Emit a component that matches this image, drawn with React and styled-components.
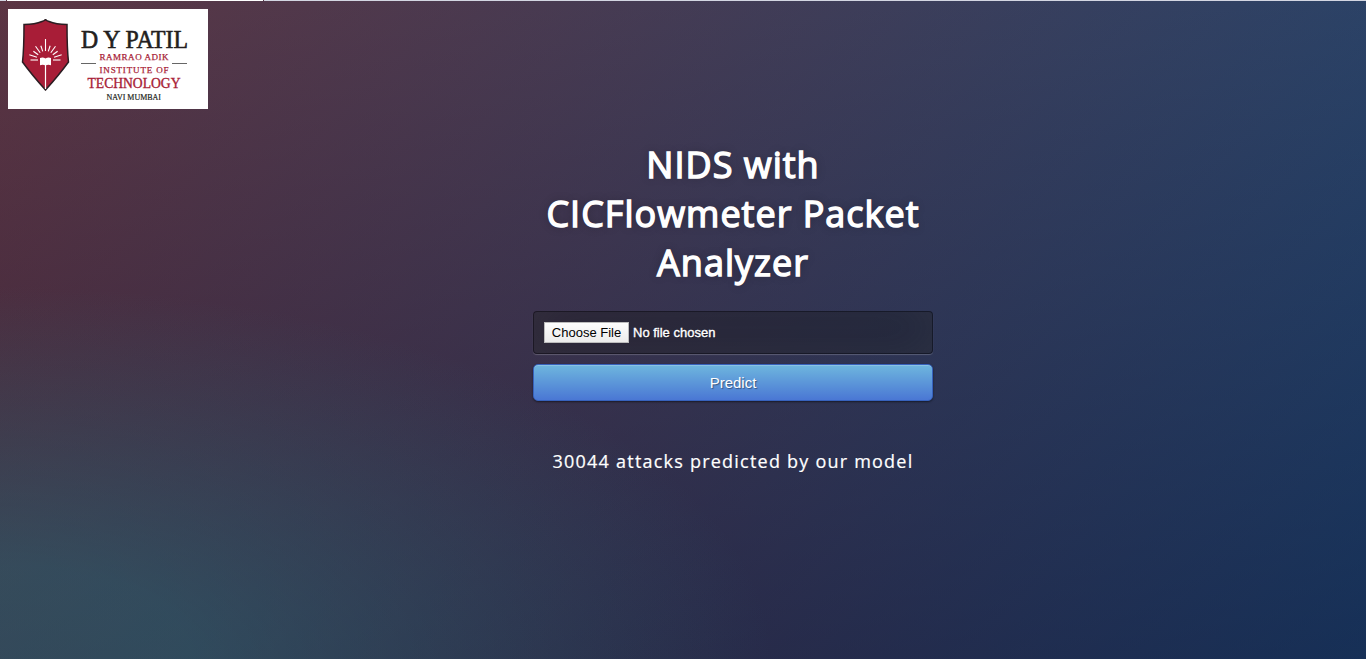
import React from "react";
import styled, { createGlobalStyle } from "styled-components";

const GlobalStyle = createGlobalStyle`
  *, *::before, *::after { box-sizing: border-box; }
  html, body { margin: 0; height: 100%; overflow: hidden; }
`;

const Page = styled.div`
  height: 100vh;
  display: flex;
  flex-direction: column;
  font-family: "Open Sans", sans-serif;
  color: #fff;
  background:
    radial-gradient(farthest-corner ellipse at 0% 100%, rgba(38, 128, 138, 0.4) 10%, rgba(38, 114, 120, 0) 40%),
    linear-gradient(to bottom, rgba(57, 173, 219, 0.25) 0%, rgba(42, 60, 87, 0.4) 100%),
    linear-gradient(135deg, #670d10 0%, #092756 100%);
`;

const TopEdge = styled.div`
  flex: none;
  display: flex;
  gap: 1px;
  height: 1px;
`;

const EdgeSegment = styled.div`
  flex: ${(p) => (p.$width ? `none` : 1)};
  width: ${(p) => p.$width || "auto"};
  background: ${(p) => p.$color};
`;

const Header = styled.header`
  flex: none;
  padding: 8px 8px 0;
`;

const Logo = styled.svg`
  display: block;
  width: 200px;
  height: 100px;
  background: #fff;
  font-family: "Liberation Serif", serif;
`;

const Main = styled.main`
  width: 400px;
  margin: 31px 0 0 533px;
  display: flex;
  flex-direction: column;
`;

const Title = styled.h1`
  margin: 0 0 24px;
  font-size: 36px;
  line-height: 49px;
  font-weight: 400;
  -webkit-text-stroke: 1.4px #fff;
  letter-spacing: 1px;
  text-align: center;
  text-shadow: 0 0 10px rgba(0, 0, 0, 0.3);
`;

const Form = styled.form`
  display: flex;
  flex-direction: column;
  gap: 10px;
  font-family: "Liberation Sans", Arial, sans-serif;
`;

const FileField = styled.div`
  display: flex;
  align-items: center;
  gap: 4px;
  height: 43px;
  padding: 0 10px;
  font-size: 13px;
  text-shadow: 1px 1px 1px rgba(0, 0, 0, 0.3);
  background: rgba(0, 0, 0, 0.3);
  border: 1px solid rgba(0, 0, 0, 0.3);
  border-radius: 4px;
  box-shadow: inset 0 -5px 45px rgba(100, 100, 100, 0.2), 0 1px 1px rgba(255, 255, 255, 0.2);
`;

const FileButton = styled.button`
  width: 85px;
  height: 21px;
  padding: 0;
  font: inherit;
  line-height: 15px;
  color: #000;
  background: linear-gradient(#fdfdfd, #ececec);
  border: 1px solid #bcbcbc;
  border-radius: 0;
  white-space: nowrap;
`;

const FileName = styled.span`
  line-height: 15px;
  -webkit-text-stroke: 0.35px #fff;
`;

const SubmitButton = styled.button`
  height: 37px;
  padding: 0 14px;
  font-family: inherit;
  font-size: 15px;
  color: #fff;
  text-shadow: 1px 1px 1px rgba(0, 0, 0, 0.4);
  background: linear-gradient(to bottom, #6eb6de, #4a77d4);
  border: 1px solid #3762bc;
  border-radius: 5px;
  box-shadow: inset 0 1px 0 rgba(255, 255, 255, 0.2), 0 1px 2px rgba(0, 0, 0, 0.5);
`;

const Result = styled.p`
  margin: 48px 0 0;
  font-size: 18px;
  line-height: 25px;
  letter-spacing: 1.22px;
  -webkit-text-stroke: 0.2px #fff;
  text-align: center;
  white-space: nowrap;
`;

const rays = [-90, -72, -54, -36, -18, 0, 18, 36, 54, 72, 90];

function InstituteLogo() {
  return (
    <Logo viewBox="0 0 200 100" role="img" aria-label="D Y Patil Ramrao Adik Institute of Technology">
      <path
        d="M16 15.5 Q27 15.5 34 12.5 Q37.5 11.5 37.5 10 Q37.5 11.5 41 12.5 Q48 15.5 59 15.5 Q59 40 60.5 53 Q51 66 37.5 81 Q24 66 14.5 53 Q16 40 16 15.5 Z"
        fill="#a81d37"
        stroke="#2b1d22"
        strokeWidth="1.5"
      />
      {rays.map((a) => (
        <line
          key={a}
          x1="37.5"
          y1={Math.abs(a) === 90 ? 43.5 : 42}
          x2="37.5"
          y2={a === 0 ? 30 : a % 36 === 0 ? 34 : 36}
          transform={`rotate(${a} 37.5 51)`}
          stroke="#fff"
          strokeWidth="1.1"
        />
      ))}
      <path d="M32 49 Q35 48 37.5 49.5 Q40 48 43 49 V56.2 Q40 55 37.5 56.5 Q35 55 32 56.2 Z" fill="#fff" />
      <line x1="37.5" y1="55" x2="37.5" y2="80" stroke="#fff" strokeWidth="1.2" />
      <text x="73" y="39.3" fontSize="25" textLength="107" lengthAdjust="spacingAndGlyphs" fill="#231f20" stroke="#231f20" strokeWidth=".6">D Y PATIL</text>
      <text x="91.5" y="51.4" fontSize="9" textLength="69" lengthAdjust="spacing" fill="#a81d37" stroke="#a81d37" strokeWidth=".25">RAMRAO ADIK</text>
      <text x="91.5" y="63.6" fontSize="9" textLength="69" lengthAdjust="spacing" fill="#a81d37" stroke="#a81d37" strokeWidth=".25">INSTITUTE OF</text>
      <text x="79.5" y="79.4" fontSize="14.6" textLength="93" lengthAdjust="spacingAndGlyphs" fill="#a81d37" stroke="#a81d37" strokeWidth=".35">TECHNOLOGY</text>
      <text x="98.5" y="91.2" fontSize="8.3" textLength="54.5" lengthAdjust="spacingAndGlyphs" fill="#231f20" stroke="#231f20" strokeWidth=".2">NAVI MUMBAI</text>
      <path d="M73 54.5H88M164 54.5H179" stroke="#666" strokeWidth="1" />
    </Logo>
  );
}

export default function App() {
  return (
    <Page>
      <GlobalStyle />
      <TopEdge>
        <EdgeSegment $width="6px" $color="#d3d6e2" />
        <EdgeSegment $width="256px" $color="#fff" />
        <EdgeSegment $color="#d3d6e2" />
      </TopEdge>
      <Header>
        <InstituteLogo />
      </Header>
      <Main>
        <Title>NIDS with CICFlowmeter Packet Analyzer</Title>
        <Form onSubmit={(e) => e.preventDefault()}>
          <FileField>
            <FileButton type="button">Choose File</FileButton>
            <FileName>No file chosen</FileName>
          </FileField>
          <SubmitButton type="submit">Predict</SubmitButton>
        </Form>
        <Result>30044 attacks predicted by our model</Result>
      </Main>
    </Page>
  );
}
